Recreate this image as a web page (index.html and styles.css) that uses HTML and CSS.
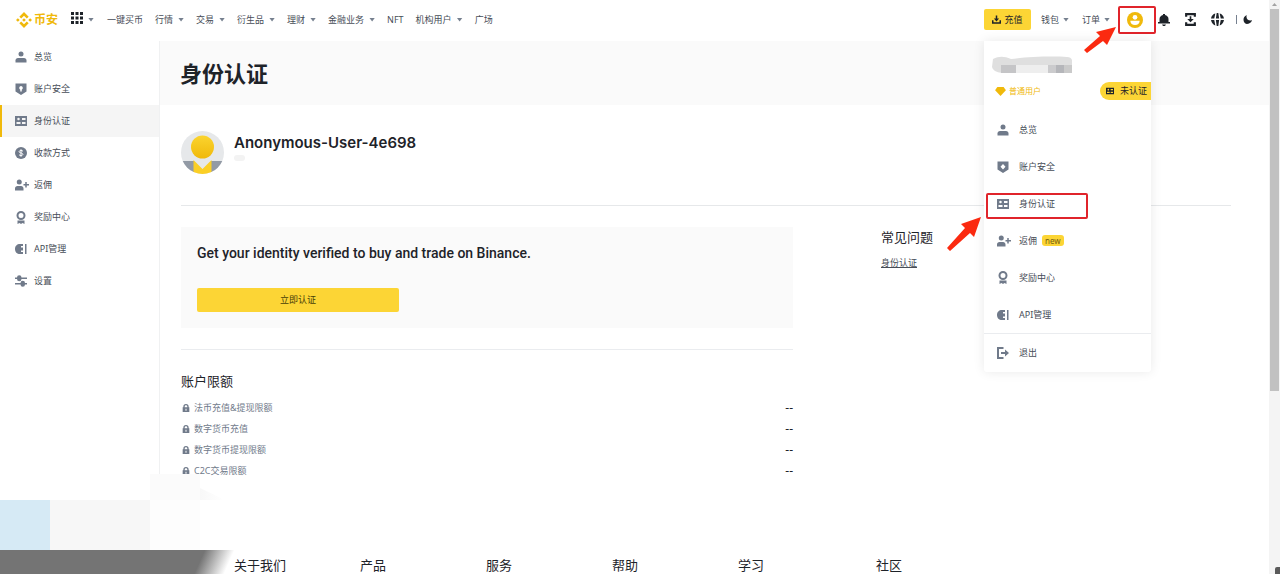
FILE: index.html
```html
<!DOCTYPE html>
<html lang="zh-CN">
<head>
<meta charset="utf-8">
<title>身份认证 - 币安</title>
<link rel="stylesheet" href="styles.css">
</head>
<body>
<svg class="defs" aria-hidden="true">
  <symbol id="i-user" viewBox="0 0 24 24"><circle cx="12" cy="6" r="5"/><path d="M1 23v-4c0-3 2-5 5-5h12c3 0 5 2 5 5v4z"/></symbol>
  <symbol id="i-shield" viewBox="0 0 24 24"><path fill-rule="evenodd" d="M1 1h22v16l-11 7-11-7zM12 6a4 4 0 0 0-1.500 7.500V17h3v-3.500A4 4 0 0 0 12 6z"/></symbol>
  <symbol id="i-shield2" viewBox="0 0 24 24"><path fill-rule="evenodd" d="M1 1h22v16l-11 7-11-7zM12 6l-5 5.500 5 5.500 5-5.500z"/></symbol>
  <symbol id="i-id" viewBox="0 0 24 24"><path fill-rule="evenodd" d="M0 2h24v20H0zM7 5.500a2.500 2.500 0 1 0 0 5 2.500 2.500 0 0 0 0-5zM3 14v4h8v-4zM14 6v4h7V6zM14 14v4h7v-4z"/></symbol>
  <symbol id="i-coin" viewBox="0 0 24 24"><circle cx="12" cy="12" r="12"/><path d="M16 8.500C15 7.500 13.500 7 12 7c-5 0-5 4.500 0 5s5 5 0 5c-1.500 0-3-.5-4-1.500M12 4.500v15" fill="none" stroke="#fff" stroke-width="2"/></symbol>
  <symbol id="i-invite" viewBox="0 0 28 24"><circle cx="8.500" cy="6" r="5"/><path d="M0 23v-4c0-3 2-5 5-5h7c3 0 5 2 5 5v4zM20.500 6h3v4H28v3h-4.500v4h-3v-4H17v-3h3.500z"/></symbol>
  <symbol id="i-medal" viewBox="0 0 24 26"><circle cx="12" cy="9" r="7" fill="none" stroke="currentColor" stroke-width="4"/><path d="M5 19h14v7l-4-2-3 2-3-2-4 2z"/></symbol>
  <symbol id="i-api" viewBox="0 0 24 24"><path d="M10 2h6v4h-4v3h4v6h-4v3h4v4h-6C4 22 0 18 0 12S4 2 10 2zM20 2h3v20h-3z"/></symbol>
  <symbol id="i-set" viewBox="0 0 24 24"><path d="M0 5h4a4.500 4.500 0 0 1 9 0h11v3H13a4.500 4.500 0 0 1-9 0H0zM0 16h11a4.500 4.500 0 0 1 9 0h4v3h-4a4.500 4.500 0 0 1-9 0H0z"/></symbol>
  <symbol id="i-exit" viewBox="0 0 24 24"><path d="M0 0h13v4H4v16h9v4H0zM16 5l8 7-8 7v-5H8v-4h8z"/></symbol>
  <symbol id="i-lock" viewBox="0 0 24 24"><path fill-rule="evenodd" d="M2 10h2V8a8 8 0 0 1 16 0v2h2v14H2zM8 10h8V8a4 4 0 0 0-8 0zM10.500 14v6h3v-6z"/></symbol>
  <symbol id="i-down" viewBox="0 0 24 24"><path d="M10 1h4v8h5l-7 8-7-8h5zM0 14h4v5h16v-5h4v9H0z"/></symbol>
</svg>

<div class="frame">
  <div class="page">
    <header class="topbar">
      <a class="logo" href="#">
        <svg viewBox="0 0 24 24" width="16" height="16" fill="currentColor"><path d="M12 0l7 7-2.800 2.800L12 5.600 7.800 9.800 5 7zM2.800 9.200L5.600 12l-2.800 2.800L0 12zM21.200 9.200L24 12l-2.800 2.800-2.800-2.800zM12 9.200l2.800 2.800-2.800 2.800L9.200 12zM7.800 14.200l4.200 4.200 4.200-4.200L19 17l-7 7-7-7z"/></svg>
        <span>币安</span>
      </a>
      <button class="apps" aria-label="产品">
        <svg viewBox="0 0 12 12" width="12" height="12"><path d="M0 0h3v3H0zM4.500 0h3v3h-3zM9 0h3v3H9zM0 4.500h3v3H0zM4.500 4.500h3v3h-3zM9 4.500h3v3H9zM0 9h3v3H0zM4.500 9h3v3h-3zM9 9h3v3H9z"/></svg>
        <i class="caret"></i>
      </button>
      <nav class="nav">
        <a href="#">一键买币</a>
        <a href="#">行情<i class="caret"></i></a>
        <a href="#">交易<i class="caret"></i></a>
        <a href="#">衍生品<i class="caret"></i></a>
        <a href="#">理财<i class="caret"></i></a>
        <a href="#">金融业务<i class="caret"></i></a>
        <a href="#">NFT</a>
        <a href="#">机构用户<i class="caret"></i></a>
        <a href="#">广场</a>
      </nav>
      <div class="tools">
        <button class="deposit"><svg width="9" height="9"><use href="#i-down"/></svg>充值</button>
        <a href="#">钱包<i class="caret"></i></a>
        <a href="#">订单<i class="caret"></i></a>
        <button class="tool account" aria-label="账户">
          <svg viewBox="0 0 24 24" width="16" height="16"><circle cx="12" cy="12" r="12" fill="#f0b90b"/><circle cx="12" cy="8" r="3.500" fill="#fff"/><path d="M5 13h14c0 4-3 6.500-7 6.500S5 17 5 13z" fill="#fff"/></svg>
          <span class="mark mark-account"></span>
        </button>
        <button class="tool" aria-label="通知"><svg viewBox="0 0 24 24" width="12" height="12"><path d="M10 0h4v2c4 1 7 4 7 8v6h3v3H0v-3h3v-6c0-4 3-7 7-8zM8 21h8l-2 3h-4z"/></svg></button>
        <button class="tool" aria-label="下载"><svg viewBox="0 0 24 24" width="13" height="13"><path d="M2 0h20v7h-4V4H6v3H2zM2 17h4v3h12v-3h4v7H2zM10.500 6h3v5H18l-6 6-6-6h4.500z"/></svg></button>
        <button class="tool" aria-label="语言"><svg viewBox="0 0 24 24" width="13" height="13"><path d="M8 1L6 10H0C1 5 4 2 8 1zM10.500 0h3L15 10H9zM16 1c4 1 7 4 8 9h-6zM0 13h6l2 10c-4-1-7-5-8-10zM9 13h6l-1.500 11h-3zM18 13h6c-1 5-4 9-8 10z"/></svg></button>
        <span class="split"></span>
        <button class="tool" aria-label="夜间模式"><svg viewBox="0 0 24 24" width="9" height="9"><path d="M10 0c-3 9 3 16 14 14-2 7-8 10-14 10C0 22-3 6 10 0z"/></svg></button>
      </div>

      <div class="menu">
        <div class="menu-name"><svg viewBox="0 0 80 18" width="80" height="18"><path d="M1 3c6-3 11-3 18 0 14-2 40-3 56-2q4 0 5 3v13H10Q1 16 0 11z" fill="#dfdfdf"/><path d="M9 9h15v8H9z" fill="#c5c5c7"/><path d="M24 9h32v8H24z" fill="#eee"/><path d="M56 9h8v8h-8z" fill="#cbcbcd"/><path d="M64 9h8v8h-8z" fill="#b5b6ba"/><path d="M72 9h8v8h-8z" fill="#cacaca"/></svg></div>
        <div class="menu-level">
          <span class="level"><svg viewBox="0 0 24 20" width="11" height="9"><path d="M5 0h14l5 7-12 13L0 7z" fill="#f0b90b"/></svg>普通用户</span>
          <a class="badge" href="#"><svg width="8" height="8"><use href="#i-id"/></svg>未认证</a>
        </div>
        <a class="menu-item" href="#"><svg width="12" height="12"><use href="#i-user"/></svg>总览</a>
        <a class="menu-item" href="#"><svg width="12" height="12"><use href="#i-shield2"/></svg>账户安全</a>
        <a class="menu-item" href="#"><svg width="12" height="12"><use href="#i-id"/></svg>身份认证<span class="mark mark-item"></span></a>
        <a class="menu-item" href="#"><svg width="14" height="12"><use href="#i-invite"/></svg>返佣<em class="new">new</em></a>
        <a class="menu-item" href="#"><svg width="12" height="13"><use href="#i-medal"/></svg>奖励中心</a>
        <a class="menu-item" href="#"><svg width="12" height="12"><use href="#i-api"/></svg>API管理</a>
        <a class="menu-item exit" href="#"><svg width="12" height="12"><use href="#i-exit"/></svg>退出</a>
      </div>
    </header>

    <div class="body">
      <aside class="side">
        <a href="#"><svg width="12" height="12"><use href="#i-user"/></svg>总览</a>
        <a href="#"><svg width="12" height="12"><use href="#i-shield"/></svg>账户安全</a>
        <a class="active" href="#"><svg width="12" height="12"><use href="#i-id"/></svg>身份认证</a>
        <a href="#"><svg width="12" height="12"><use href="#i-coin"/></svg>收款方式</a>
        <a href="#"><svg width="14" height="12"><use href="#i-invite"/></svg>返佣</a>
        <a href="#"><svg width="12" height="13"><use href="#i-medal"/></svg>奖励中心</a>
        <a href="#"><svg width="12" height="12"><use href="#i-api"/></svg>API管理</a>
        <a href="#"><svg width="12" height="12"><use href="#i-set"/></svg>设置</a>
      </aside>
      <main class="main">
        <h1 class="banner">身份认证</h1>
        <div class="content">
          <section class="profile">
            <svg viewBox="0 0 43 43" width="43" height="43">
              <defs><clipPath id="round"><circle cx="21.500" cy="21.500" r="21.500"/></clipPath><linearGradient id="gold" x2="0" y2="1"><stop stop-color="#fbd42f"/><stop offset="1" stop-color="#f0b90b"/></linearGradient></defs>
              <g clip-path="url(#round)"><path d="M0 0h43v43H0z" fill="#e6e8ea"/><path d="M0 30h13v13H0zM30 30h13v13H30z" fill="#929aa5"/><path d="M12.500 29l9 9 9-9v14h-18z" fill="#fbcf26"/></g>
              <circle cx="21.500" cy="16" r="11.500" fill="url(#gold)"/>
            </svg>
            <div><h2 class="username">Anonymous-User-4e698</h2><span class="smudge"></span></div>
          </section>
          <div class="columns">
            <div>
              <section class="card">
                <p>Get your identity verified to buy and trade on Binance.</p>
                <button class="verify">立即认证</button>
              </section>
              <section class="limits">
                <h3>账户限额</h3>
                <dl>
                  <div><dt><svg width="8" height="8"><use href="#i-lock"/></svg>法币充值&amp;提现限额</dt><dd>--</dd></div>
                  <div><dt><svg width="8" height="8"><use href="#i-lock"/></svg>数字货币充值</dt><dd>--</dd></div>
                  <div><dt><svg width="8" height="8"><use href="#i-lock"/></svg>数字货币提现限额</dt><dd>--</dd></div>
                  <div><dt><svg width="8" height="8"><use href="#i-lock"/></svg>C2C交易限额</dt><dd>--</dd></div>
                </dl>
              </section>
            </div>
            <section class="faq">
              <h3>常见问题</h3>
              <a href="#">身份认证</a>
            </section>
          </div>
        </div>
      </main>
    </div>

    <footer class="footer">
      <h3>关于我们</h3><h3>产品</h3><h3>服务</h3><h3>帮助</h3><h3>学习</h3><h3>社区</h3>
    </footer>

    <svg class="arrow arrow-top" viewBox="0 0 34 28" width="34" height="28"><path d="M1 24L17 10l-4-4L33 1l-9 18-4-4L4 27z"/></svg>
    <svg class="arrow arrow-item" viewBox="0 0 36 36" width="36" height="36"><path d="M1 32L19 12l-4-4L35 1l-7 20-4-4L4 35z"/></svg>
    <svg class="mosaic" viewBox="0 0 240 100" width="240" height="100" aria-hidden="true">
      <defs><linearGradient id="fade" gradientUnits="userSpaceOnUse" x1="203" y1="80" x2="228" y2="91"><stop stop-color="#747474"/><stop offset="1" stop-color="#747474" stop-opacity="0"/></linearGradient><linearGradient id="soft"><stop stop-color="#f8f8f8"/><stop offset="1" stop-color="#fff"/></linearGradient></defs>
      <path d="M150 0h50v26h-50z" fill="#fbfbfb"/><path d="M200 14l25 12h-25z" fill="url(#soft)"/>
      <path d="M0 26h50v50H0z" fill="#d6eaf5"/><path d="M50 26h100v50H50z" fill="#f7f7f7"/><path d="M150 26h50v50h-50z" fill="#fdfdfd"/>
      <path d="M0 76h240v24H0z" fill="url(#fade)"/>
    </svg>
  </div>
  <div class="scroll" aria-hidden="true"><span class="up"></span><span class="thumb"></span><span class="corner"></span></div>
</div>
</body>
</html>
```
FILE: styles.css
```css
* { box-sizing: border-box; }
body {
  margin: 0;
  background: #fff;
  color: #474d57;
  font: 9px/16px "Noto Sans", "Noto Sans CJK SC", sans-serif;
}
h1, h2, h3, p, dl, dd { margin: 0; font-weight: 400; }
a { color: inherit; text-decoration: none; }
button { padding: 0; border: 0; background: none; color: inherit; font: inherit; }
svg { display: block; flex: none; fill: currentColor; }
.defs { position: absolute; width: 0; height: 0; }

.frame { display: flex; height: 100vh; overflow: hidden; }
.page { position: relative; flex: 1; display: flex; flex-direction: column; }

.topbar { position: relative; display: flex; align-items: center; height: 41px; padding: 0 17px 2px 16px; flex: none; }
.logo { display: flex; align-items: center; gap: 2px; width: 55px; color: #f0b90b; font-size: 12px; font-weight: 700; }
.apps { display: flex; align-items: center; gap: 5px; width: 36px; height: 16px; color: #1e2329; }
.apps svg { margin-bottom: 4px; }
.caret { width: 6px; height: 4px; background: #76808f; clip-path: polygon(0 0, 100% 0, 50% 100%); }
.nav { display: flex; gap: 12px; }
.nav a, .tools a { display: flex; align-items: center; gap: 5px; white-space: nowrap; }
.tools { display: flex; align-items: center; margin-left: auto; color: #1e2329; }
.tools a { margin-right: 13px; gap: 4px; color: #474d57; }
.deposit { display: flex; align-items: center; justify-content: center; gap: 3px; width: 47px; height: 21px; margin-right: 10px; border-radius: 2px; background: #fcd535; }
.tool { margin-right: 14px; }
.tool:last-child { margin-right: 0; }
.account { position: relative; margin: 0 15px 0 4px; }
.split { width: 1px; height: 9px; margin: 0 6px 0 -2px; background: #76808f; }

.mark { position: absolute; border: 2px solid #e0242b; border-radius: 2px; }
.mark-account { inset: -6px -13px -6px -9px; }
.mark-item { inset: 8px 63px 3px 2px; }
.arrow { position: absolute; z-index: 3; fill: #fb2a10; }
.arrow-top { left: 1083px; top: 26px; }
.arrow-item { left: 946px; top: 216px; }

.menu { position: absolute; z-index: 2; top: 41px; right: 118px; width: 167px; background: #fff; border-radius: 0 0 3px 3px; box-shadow: 0 0 12px rgba(20, 21, 26, .09); }
.menu-name { padding: 15px 8px 0; }
.menu-level { display: flex; align-items: center; justify-content: space-between; height: 18px; margin: 8px 0 11px; padding-left: 11px; }
.level { display: flex; align-items: center; gap: 3px; color: #f0b90b; font-size: 8px; }
.badge { display: flex; align-items: center; gap: 6px; height: 18px; padding: 0 4px 0 6px; border-radius: 9px 0 0 9px; background: #fcd535; color: #1e2329; }
.menu-item { position: relative; display: flex; align-items: center; height: 37px; padding-left: 13px; color: #474d57; }
.menu-item svg, .side svg { color: #707a8a; }
.menu-item svg { margin-right: 10px; }
.menu-item svg[width="14"] { margin-right: 8px; }
.exit { height: 39px; border-top: 1px solid #eaecef; }
.new { margin-left: 5px; padding: 0 3px; border-radius: 3px; background: #fcd535; color: #76600d; font-size: 8px; line-height: 11px; font-style: normal; }

.body { display: flex; flex: 1; }
.side { width: 160px; flex: none; border-right: 1px solid #f0f1f2; }
.side a { display: flex; align-items: center; height: 32px; padding-left: 15px; }
.side svg { margin-right: 7px; }
.side svg[width="14"] { margin-right: 5px; }
.side .active { padding-left: 13px; border-left: 2px solid #f0b90b; background: #f5f5f5; }
.main { flex: 1; }
.banner { height: 64px; padding-left: 20px; background: #fafafa; color: #1e2329; font-size: 22px; line-height: 64px; font-weight: 700; }
.content { padding: 0 38px 0 21px; }
.profile { display: flex; gap: 10px; height: 101px; padding-top: 26px; border-bottom: 1px solid #e6e8ea; }
.username { color: #1e2329; font: 600 15px/24px "Inter", sans-serif; }
.smudge { display: block; width: 11px; height: 6px; border-radius: 3px; background: #f3f3f3; }
.columns { display: grid; grid-template-columns: 612fr 350fr; gap: 88px; padding-top: 21px; }
.card { height: 101px; padding: 16px; background: #fafafa; }
.card p { color: #1e2329; font: 500 14px/20px "Roboto", sans-serif; }
.verify { display: block; width: 202px; height: 24px; margin-top: 25px; border-radius: 2px; background: #fcd535; color: #474008; }
.limits { margin-top: 21px; padding-top: 21px; border-top: 1px solid #eaecef; }
.limits h3, .faq h3, .footer h3 { color: #1e2329; font-size: 13px; line-height: 20px; }
.limits dl { padding-top: 6px; color: #707a8a; }
.limits dl div { display: flex; justify-content: space-between; line-height: 21px; }
.limits dt { display: flex; align-items: center; gap: 4px; padding-left: 1px; }
.limits dd { color: #1e2329; font-size: 12px; }
.faq a { display: inline-block; margin-top: 8px; text-decoration: underline; }
.footer { display: grid; grid-template-columns: 126fr 126fr 126fr 126fr 138fr 393fr; padding-left: 234px; flex: none; }
.footer h3 { line-height: 18px; }
.mosaic { position: absolute; left: 0; bottom: 0; }

.scroll { display: flex; flex-direction: column; align-items: center; width: 11px; flex: none; background: #f4f4f4; }
.up { width: 5px; height: 3px; margin: 3px 0; background: #a3a3a3; clip-path: polygon(50% 0, 100% 100%, 0 100%); }
.thumb { width: 9px; height: 382px; background: #c1c1c1; }
.corner { width: 5px; height: 7px; margin-top: auto; background: #5a5a5a; border-radius: 2px 0 0 0; align-self: flex-end; }
```
